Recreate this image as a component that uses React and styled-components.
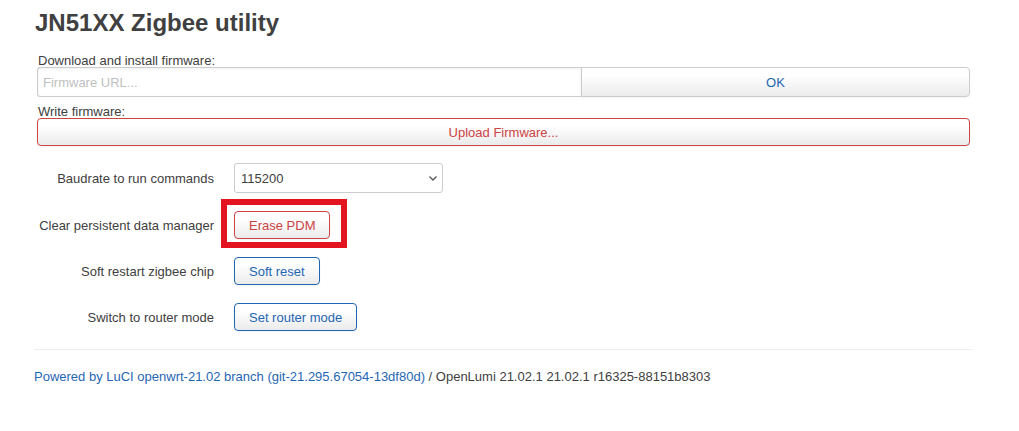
import React from 'react'
import styled, { createGlobalStyle } from 'styled-components'

const GlobalStyle = createGlobalStyle`
  body {
    margin: 0;
    background: #fff;
    font-family: "Liberation Sans", Arial, sans-serif;
    color: #404040;
  }
`

const Page = styled.div`
  width: 939px;
  padding: 9px 0 0 34px;
`
const Title = styled.h2`
  margin: 0 0 13px 1px;
  font-size: 24px;
  line-height: 28px;
  font-weight: bold;
  color: #404040;
`
const Field = styled.div`
  display: flex;
  flex-direction: column;
  padding: 0 3px;
  margin-bottom: 4px;
`
const FieldLabel = styled.label`
  font-size: 13px;
  line-height: 21px;
  color: #404040;
  margin-left: 1px;
  height: 17px;
`
const InputGroup = styled.div`
  display: flex;
  height: 30px;
`
const UrlInput = styled.input`
  flex: 1;
  box-sizing: border-box;
  height: 30px;
  margin: 0;
  padding: 4px 5px;
  border: 1px solid #ccc;
  border-right: none;
  border-radius: 3px 0 0 3px;
  font: 13px "Liberation Sans", Arial, sans-serif;
  color: #404040;
  box-shadow: inset 0 1px 3px rgba(0, 0, 0, 0.06);
  &::placeholder {
    color: #bfbfbf;
  }
`
const Button = styled.button`
  box-sizing: border-box;
  height: ${(p) => p.$h || 28}px;
  padding: 0 14px;
  margin: 0;
  font: 13px "Liberation Sans", Arial, sans-serif;
  border: 1px solid ${(p) => (p.$tone === 'red' ? '#c44' : p.$tone === 'blue' ? '#1f66b3' : '#ccc')};
  border-radius: ${(p) => p.$radius || '4px'};
  color: ${(p) => (p.$tone === 'red' ? '#c44' : '#1f66b3')};
  background: linear-gradient(#fff, #fff 25%, #ebebeb);
  box-shadow: inset 0 1px 0 rgba(255, 255, 255, 0.2), 0 1px 2px rgba(0, 0, 0, 0.05);
  cursor: pointer;
`
const OkButton = styled(Button)`
  width: 389px;
`
const WideButton = styled(Button)`
  width: 100%;
`
const Rows = styled.div`
  display: flex;
  flex-direction: column;
  gap: 18px;
  margin-top: 17px;
`
const Row = styled.div`
  display: grid;
  grid-template-columns: 180px auto;
  column-gap: 20px;
  align-items: center;
  justify-items: start;
`
const RowLabel = styled.div`
  justify-self: end;
  font-size: 13px;
  color: #404040;
`
const SelectWrap = styled.div`
  position: relative;
  width: 209px;
  height: 30px;
`
const Select = styled.select`
  box-sizing: border-box;
  width: 100%;
  height: 30px;
  appearance: none;
  padding: 0 6px;
  border: 1px solid #ccc;
  border-radius: 3px;
  background: #fff;
  font: 13px "Liberation Sans", Arial, sans-serif;
  color: #404040;
`
const Chevron = styled.svg`
  position: absolute;
  right: 5px;
  top: 11px;
  pointer-events: none;
`
const Highlight = styled.div`
  position: relative;
`
const HighlightBox = styled.div`
  position: absolute;
  left: -13px;
  top: -12px;
  width: 126px;
  height: 49px;
  box-sizing: border-box;
  border: 6px solid #e3141f;
  pointer-events: none;
`
const Rule = styled.hr`
  margin: 18px 0 0 0;
  border: none;
  border-top: 1px solid #eee;
`
const Footer = styled.div`
  padding-top: 19px;
  font-size: 13px;
  color: #404040;
`
const FooterLink = styled.a`
  color: #1f66b3;
  text-decoration: none;
`

export default function App() {
  return (
    <>
      <GlobalStyle />
      <Page>
        <Title>JN51XX Zigbee utility</Title>
        <Field>
          <FieldLabel>Download and install firmware:</FieldLabel>
          <InputGroup>
            <UrlInput placeholder="Firmware URL..." />
            <OkButton $h={30} $radius="0 4px 4px 0">OK</OkButton>
          </InputGroup>
        </Field>
        <Field>
          <FieldLabel>Write firmware:</FieldLabel>
          <WideButton $tone="red">Upload Firmware...</WideButton>
        </Field>
        <Rows>
          <Row>
            <RowLabel>Baudrate to run commands</RowLabel>
            <SelectWrap>
              <Select defaultValue="115200">
                <option>115200</option>
                <option>38400</option>
                <option>1000000</option>
              </Select>
              <Chevron width="10" height="8" viewBox="0 0 10 8">
                <path d="M1.5 2.5 L5 6 L8.5 2.5" fill="none" stroke="#555" strokeWidth="1.3" />
              </Chevron>
            </SelectWrap>
          </Row>
          <Row>
            <RowLabel>Clear persistent data manager</RowLabel>
            <Highlight>
              <Button $tone="red">Erase PDM</Button>
              <HighlightBox />
            </Highlight>
          </Row>
          <Row>
            <RowLabel>Soft restart zigbee chip</RowLabel>
            <Button $tone="blue">Soft reset</Button>
          </Row>
          <Row>
            <RowLabel>Switch to router mode</RowLabel>
            <Button $tone="blue">Set router mode</Button>
          </Row>
        </Rows>
        <Rule />
        <Footer>
          <FooterLink href="#">Powered by LuCI openwrt-21.02 branch (git-21.295.67054-13df80d)</FooterLink>
          {' / OpenLumi 21.02.1 21.02.1 r16325-88151b8303'}
        </Footer>
      </Page>
    </>
  )
}
